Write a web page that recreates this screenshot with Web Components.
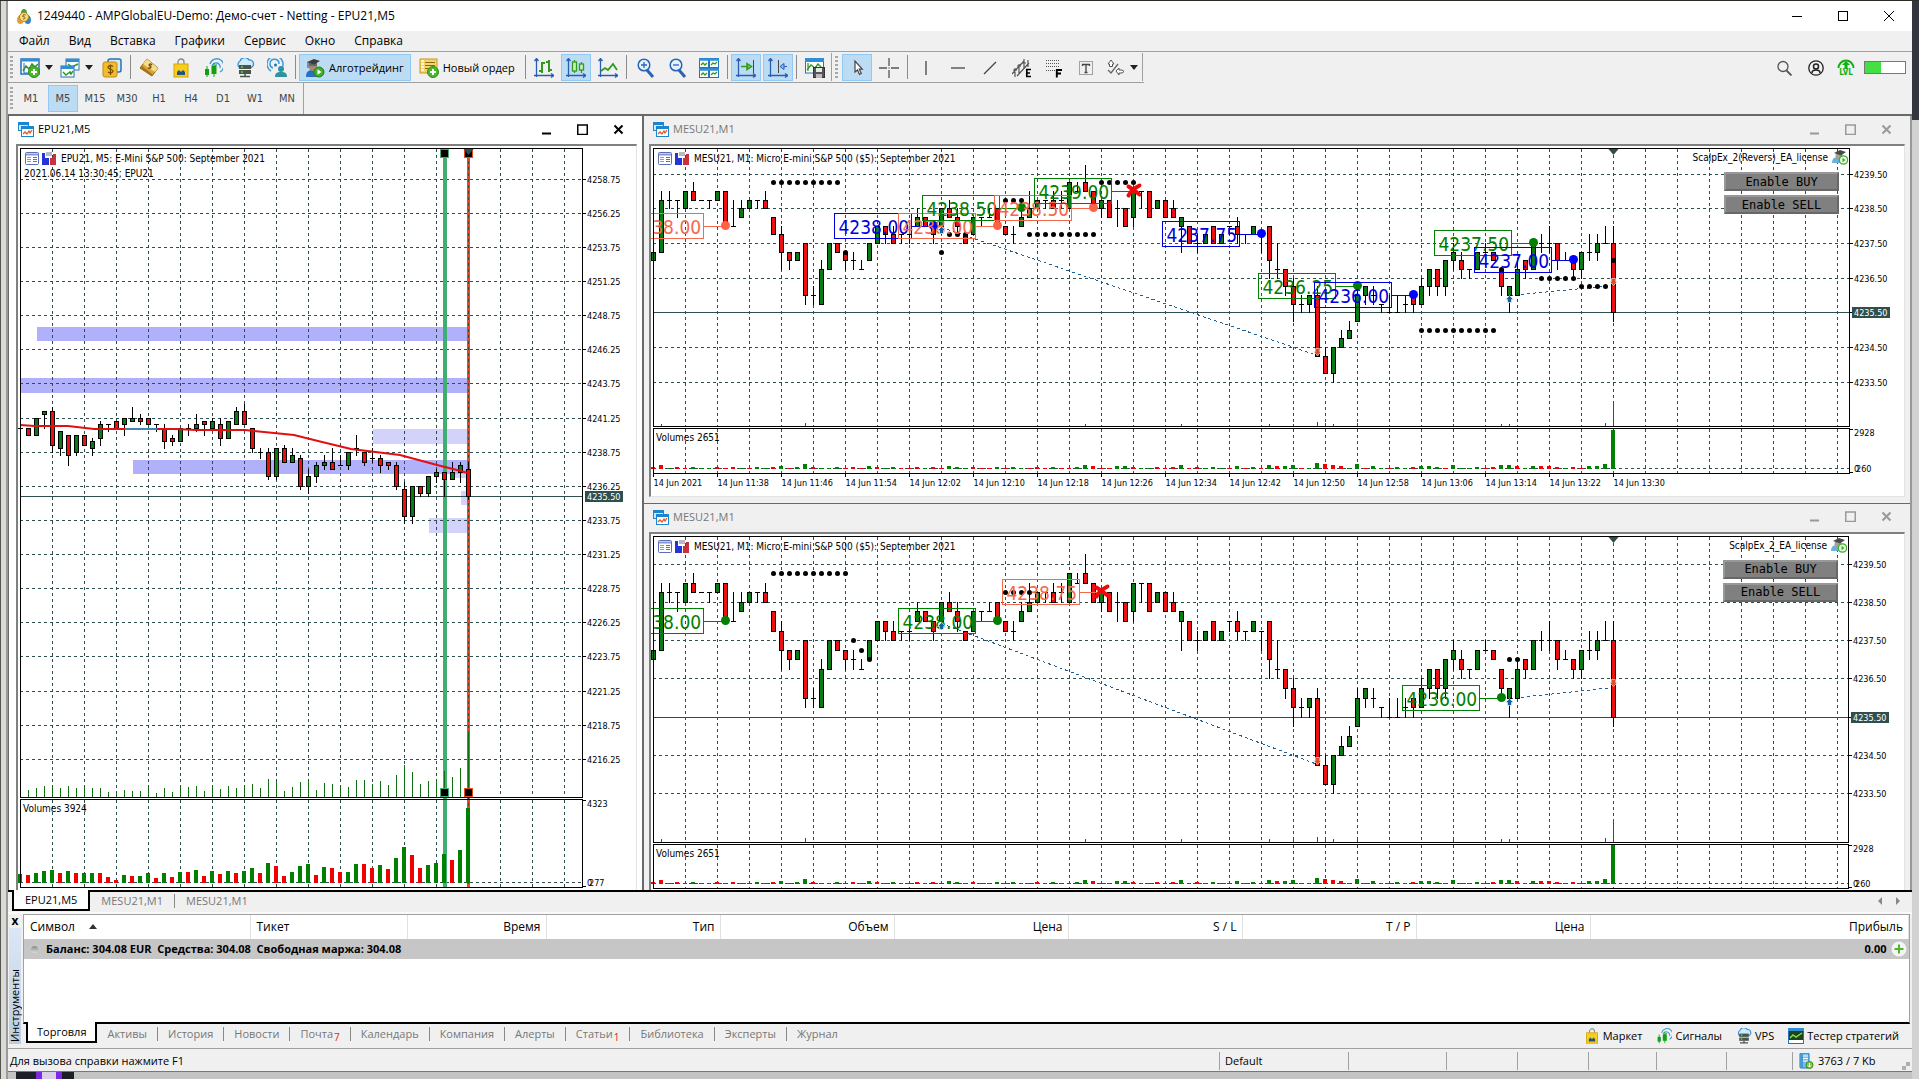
<!DOCTYPE html>
<html lang="ru">
<head>
<meta charset="utf-8">
<title>1249440 - AMPGlobalEU-Demo: Демо-счет - Netting - EPU21,M5</title>
<style>
html,body{margin:0;height:100%}
body{
  --ui:"Open Sans","Noto Sans",sans-serif;
  --tiny:"DejaVu Sans Condensed","DejaVu Sans",sans-serif;
  --face:#f0f0f0; --hot:#bcdcf4; --hotline:#90c8f6;
  font:12px/16px var(--ui);color:#000;overflow:hidden;box-sizing:border-box;
  padding:1px 7px 7px 8px;
  background:
    linear-gradient(#2b2b26,#2b2b26) 0 0/100% 1px no-repeat,
    linear-gradient(#33363f 0 120px,#d2d2d2 120px) right 0/7px 100% no-repeat,
    linear-gradient(90deg,#55554f 0 1px,#d9d9d6 1px 6px,#9a9a98 6px) 0 0/8px 100% no-repeat,
    linear-gradient(90deg,#1e2028 0 20px,#7a2be0 20px 26px,#d8d0e8 26px 40px,#7a2be0 40px 46px,#1e2028 46px) 16px 100%/58px 7px no-repeat,
    #c4c4c4;
}
mt-terminal{height:100%}
</style>
</head>
<body>
<mt-terminal></mt-terminal>
<script>
const ICONS={
app:`<path d="M8 1c2 0 3 2 3 4H5c0-2 1-4 3-4z" fill="#3aa53a"/><path d="M1 12c0-4 3-6 5-5l1 8c-3 2-6 1-6-3z" fill="#e0a030"/><path d="M15 12c0-4-3-6-5-5l-1 8c3 2 6 1 6-3z" fill="#2d86c8"/><circle cx="8" cy="9" r="4.500" fill="#f7e08a" stroke="#b98314"/><path d="M9.700 6.800H7.200l-.4 2c3-.6 3.300 2.600 0 2.300" fill="none" stroke="#8a5a08"/>`,
win:`<rect x=".5" y="1.500" width="10" height="8" fill="#cde9fb" stroke="#1a86d0"/><rect x="0" y="1" width="11" height="3" fill="#1a86d0"/><rect x="3.500" y="5.500" width="12" height="10" fill="#fff" stroke="#1a86d0"/><rect x="3" y="5" width="13" height="3" fill="#1a86d0"/><path d="M5 13l2-2 2 2 2-3 1 2 2-3" fill="none" stroke="#e5562b" stroke-width="1.300"/>`,
newchart:`<rect x="1" y="1" width="18" height="15" fill="#fff" stroke="#2472b8" stroke-width="1.500"/><rect x="1" y="1" width="18" height="2.500" fill="#2d8fd8"/><path d="M3 13l3-5 3 3 3-5 3 3 3-3" fill="none" stroke="#2e9a22" stroke-width="1.500"/><path d="M4 5v10h8" fill="none" stroke="#2472b8"/><circle cx="14" cy="14" r="5.500" fill="#49b82c" stroke="#2e8d18"/><path d="M14 11v6M11 14h6" stroke="#fff" stroke-width="2"/>`,
profiles:`<rect x="6" y="1" width="13" height="11" fill="#fff" stroke="#2472b8"/><rect x="6" y="1" width="13" height="3" fill="#2d8fd8"/><path d="M8 6l4 3 6-3" fill="none" stroke="#2e9a22" stroke-width="1.500"/><rect x="1" y="8" width="13" height="11" fill="#fff" stroke="#2472b8"/><rect x="1" y="8" width="13" height="3" fill="#2d8fd8"/><path d="M3 14l3 3 4-3 1 2 2-3" fill="none" stroke="#2e9a22" stroke-width="1.500"/>`,
dollar:`<rect x="6" y="1" width="13" height="13" rx="2" fill="#d6ecfb" stroke="#2472b8" stroke-width="1.500"/><rect x="1" y="4" width="14" height="15" rx="2" fill="#f2bd2c" stroke="#c58a10"/><path d="M11 8.500c-2-1.500-5-1-5 1s5 1.500 5 3.500-3 2.500-5 1M8.500 6.500v10.500" fill="none" stroke="#7a4d00" stroke-width="1.300"/>`,
gold:`<path d="M8 1l11 9-6 8L1 10z" fill="#d9a53a" stroke="#8f6614"/><path d="M8 1l11 9-3 4L4 6z" fill="#f6dc8c"/><path d="M1 10l12 8v-2L3 8z" fill="#a8741a"/><path d="M13 7c-2-2-4 0-2 1s0 3-2 2" fill="none" stroke="#7a5209" stroke-width="1.500"/>`,
bag:`<path d="M7 7V4a3 3 0 016 0v3" fill="none" stroke="#888" stroke-width="1.300"/><rect x="3" y="6" width="14" height="13" fill="#f6cf1d" stroke="#d1a40a"/><path d="M6 17v-3l2-2 2 2 2-2 2 2v3z" fill="#26517f"/>`,
signals:`<path d="M9 8a4 4 0 118 2M7 6a7 7 0 1110 8M11 11a3 3 0 013-4" fill="none" stroke="#3d9ad8" stroke-width="1.300"/><path d="M4 8v11M11 5v14" stroke="#12a012"/><rect x="2" y="11" width="4" height="6" fill="#12a012"/><rect x="8.500" y="8" width="5" height="8" fill="#12a012"/>`,
vps:`<path d="M5 10a4 4 0 010-7 5 5 0 019-1 4 4 0 011 8z" fill="#cfeafc" stroke="#3d8fd0" stroke-width="1.300"/><rect x="4" y="7" width="12" height="4" fill="#48564a"/><rect x="4" y="12" width="12" height="4" fill="#48564a"/><path d="M10 16v3M5 18.500h10" stroke="#48564a" stroke-width="1.500"/><path d="M6 9h2M6 14h2" stroke="#5bd64d" stroke-width="1.500"/>`,
cast:`<path d="M4 13a8 8 0 1111-3M6 10a4.500 4.500 0 116-4" fill="none" stroke="#3d9ad8" stroke-width="1.500"/><circle cx="8.500" cy="7" r="1.500" fill="#2472b8"/><circle cx="14" cy="11" r="3" fill="#2e93a0"/><path d="M8 19c0-4 2-5 6-5s6 1 6 5z" fill="#2e93a0"/>`,
algo:`<path d="M1 19c0-5 2-7 6-7s6 2 6 7z" fill="#2a6fc4"/><circle cx="8" cy="9" r="4" fill="#a08a70"/><path d="M4 5v3h8V5z" fill="#666"/><path d="M2 4l7-3 6 2-6 3.500z" fill="#3c3c3c"/><path d="M3 4v6" stroke="#3c3c3c"/><circle cx="14" cy="14" r="5" fill="#3fae2a" stroke="#278016"/><path d="M12.500 11.200l4 2.800-4 2.800z" fill="#fff"/>`,
order:`<rect x="1" y="1" width="17" height="14" fill="#f4d46a" stroke="#c69a1c"/><path d="M6 4.500h10M6 7.500h10M6 10.500h10" stroke="#8a6a10"/><path d="M2 3h3M2 6h3M2 9h3M2 12h3" stroke="#fff" stroke-width="1.500"/><circle cx="14" cy="14" r="5.500" fill="#49b82c" stroke="#2e8d18"/><path d="M14 11v6M11 14h6" stroke="#fff" stroke-width="2"/>`,
bars:`<path d="M2.500 1v18M0 17.500h20M17 15.500l3 2-3 2M.5 3l2-2.500 2 2.500" fill="none" stroke="#2a5cb4" stroke-width="1.300"/><path d="M8 4v11M5 13h3M8 5h3M15 2v12M12 4h3M15 12h3" stroke="#2e9a22" stroke-width="2"/>`,
candles:`<path d="M2.500 1v18M0 17.500h20M17 15.500l3 2-3 2M.5 3l2-2.500 2 2.500" fill="none" stroke="#2a5cb4" stroke-width="1.300"/><path d="M8.500 2v13M15.500 4v11" stroke="#2e9a22" stroke-width="1.300"/><rect x="6.500" y="4" width="4" height="9" fill="#cfeebb" stroke="#2e9a22" stroke-width="1.300"/><rect x="13.500" y="6" width="4" height="6" fill="#cfeebb" stroke="#2e9a22" stroke-width="1.300"/>`,
line:`<path d="M2.500 1v18M0 17.500h20M17 15.500l3 2-3 2M.5 3l2-2.500 2 2.500" fill="none" stroke="#2a5cb4" stroke-width="1.300"/><path d="M3 13l4-3 3 2 5-6 4 6" fill="none" stroke="#2e9a22" stroke-width="1.800"/>`,
zin:`<path d="M12 12l6 7" stroke="#2a62b8" stroke-width="3"/><circle cx="9" cy="7" r="5.800" fill="#e4f3fd" stroke="#2a62b8" stroke-width="1.500"/><path d="M9 4v6M6 7h6" stroke="#2a62b8" stroke-width="1.300"/>`,
zout:`<path d="M12 12l6 7" stroke="#2a62b8" stroke-width="3"/><circle cx="9" cy="7" r="5.800" fill="#e4f3fd" stroke="#2a62b8" stroke-width="1.500"/><path d="M6 7h6" stroke="#2a62b8" stroke-width="1.300"/>`,
tile:`<g fill="#fff" stroke="#2472b8"><rect x=".5" y=".5" width="9" height="9"/><rect x="10.500" y=".5" width="9" height="9"/><rect x=".5" y="10.500" width="9" height="9"/><rect x="10.500" y="10.500" width="9" height="9"/></g><path d="M0 1.500h20M0 11.500h20" stroke="#2d8fd8" stroke-width="2.500"/><path d="M2 7l2-2 2 2 2-2M12 7l2-2 2 1 2-2M2 17l2-2 2 2 2-2M12 17l2-2 2 1 2-2" fill="none" stroke="#2e9a22" stroke-width="1.300"/>`,
scroll:`<path d="M2.500 1v18M0 17.500h20M17 15.500l3 2-3 2M.5 3l2-2.500 2 2.500" fill="none" stroke="#2a5cb4" stroke-width="1.300"/><path d="M17.500 2v13" stroke="#444"/><path d="M5 8.500h7M11 5.500l4.500 3-4.500 3z" stroke="#2e9a22" stroke-width="1.500" fill="#6cc84a"/>`,
shift:`<path d="M2.500 1v18M0 17.500h20M17 15.500l3 2-3 2M.5 3l2-2.500 2 2.500" fill="none" stroke="#2a5cb4" stroke-width="1.300"/><path d="M10.500 2v13" stroke="#444"/><path d="M19 8.500h-3M16 5.500l-4 3 4 3z" stroke="#2a5cb4" fill="#8fbcec"/>`,
save:`<rect x=".5" y="1" width="18" height="14" fill="#fff" stroke="#2472b8"/><rect x="0" y="0" width="19" height="4" fill="#2d8fd8"/><path d="M3 5v8M2 12l4-5 4 3 3-4 4 4" fill="none" stroke="#2e9a22" stroke-width="1.300"/><rect x="8.500" y="9.500" width="11" height="10" fill="#555" stroke="#333"/><rect x="11" y="10" width="6" height="4" fill="#e8e8e8"/><rect x="11" y="16" width="6" height="4" fill="#bbb"/>`,
cursor:`<path d="M8 3v11l2.500-2 2 4.500 1.800-1-2-4.300h3z" fill="#fff" stroke="#444" stroke-width="1.200"/>`,
cross:`<path d="M10 0v8M10 12v8M0 10h8M12 10h8" stroke="#555" stroke-width="1.300"/><circle cx="10" cy="10" r=".7" fill="#555"/>`,
vline:`<path d="M10 3v14" stroke="#444" stroke-width="1.300"/>`,
hline:`<path d="M3 10h14" stroke="#444" stroke-width="1.300"/>`,
trend:`<path d="M4 16L16 4" stroke="#444" stroke-width="1.300"/>`,
chan:`<path d="M0 16L12 3M5 18L17 5M3 10v9M7 6v9M12 1v9M16 2v7M1 12h4M5 8h4M10 5h4" stroke="#555" stroke-width="1.200" fill="none"/><path d="M14 11.500h5M14 15h4M14 18.500h5M14.800 11v8" stroke="#000" stroke-width="1.700"/>`,
fib:`<path d="M2 2.500h14M2 5.500h14M2 8.500h14M2 12.500h9" stroke="#555" stroke-dasharray="1 1"/><path d="M12 12h6M12 15.500h5M12.800 11.500v8" stroke="#000" stroke-width="1.900"/>`,
text:`<rect x="3.500" y="3.500" width="13" height="13" fill="none" stroke="#555" stroke-dasharray="1 1"/><path d="M6 6.500h8M10 6.500v8M8.500 14.500h3M6.500 6v2M13.500 6v2" stroke="#444" stroke-width="1.300"/>`,
shapes:`<path d="M3 6l3-4 3 4H7.500v2.500h-3V6zM11 13l3-3 0 2 3 0 2 1.500-2 1.500-3 0 0 2z" fill="#fff" stroke="#555"/><path d="M3 12l3 3 7-9" fill="none" stroke="#666" stroke-width="1.300"/>`,
search:`<circle cx="7" cy="6.500" r="5" fill="none" stroke="#555" stroke-width="1.300"/><path d="M10.500 10.500l5 5" stroke="#555" stroke-width="1.800"/>`,
user:`<circle cx="8" cy="8" r="7.200" fill="none" stroke="#222" stroke-width="1.300"/><circle cx="8" cy="6.500" r="2.500" fill="none" stroke="#222" stroke-width="1.500"/><path d="M4 13c0-4 8-4 8 0" fill="none" stroke="#222" stroke-width="1.500"/>`,
list:`<rect x=".5" y=".5" width="13" height="12" rx="1" fill="#fff" stroke="#5b6fb8"/><path d="M1 2.500h12" stroke="#8796d8" stroke-width="2"/><path d="M2 5.500h4M2 7.500h4M2 9.500h4" stroke="#e77"/><path d="M8 5.500h4M8 7.500h4M8 9.500h4" stroke="#66c"/>`,
dom:`<path d="M0 1h3v5h4v7H0z" fill="#2534d8"/><path d="M14 2h-3v4H8v7h6z" fill="#c8323c"/><rect x="4" y="0" width="6" height="4" fill="#b8b8c8"/>`,
hat:`<path d="M0 13c0-4 2-6 6-6s5 2 5 6z" fill="#6ab0e4"/><circle cx="7" cy="6" r="3.500" fill="#a8a296"/><path d="M2 3l6-3 6 2-5 3.500z" fill="#4a4a4a"/><circle cx="11.500" cy="10" r="4.200" fill="#eaf8e0" stroke="#3fae2a" stroke-width="1.300"/><path d="M10.500 7.800l3 2.200-3 2.200z" fill="#3fae2a"/>`,
tester:`<rect x=".5" y=".5" width="15" height="15" fill="#fff" stroke="#2472b8"/><rect x="0" y="0" width="16" height="3" fill="#2d8fd8"/><rect x="1" y="3" width="14" height="9" fill="#204020"/><path d="M2 10l3-3 3 2 6-4" stroke="#7de04a" fill="none" stroke-width="1.500"/>`,
net:`<rect x="2" y="0" width="9" height="15" rx="1" fill="#6ec0f0" stroke="#2472b8"/><path d="M5 3h5M5 5.500h5M5 8h5" stroke="#fff"/><path d="M4 1v13" stroke="#2472b8"/><circle cx="11.500" cy="12" r="3.500" fill="#7cc84a" stroke="#3d8a18"/><path d="M11.500 10v4M10 12.500l1.500 1.500 1.500-1.500" stroke="#fff" fill="none"/>`,
plus:`<circle cx="8" cy="8" r="7.500" fill="#f4f4f4"/><path d="M8 3.500v9M3.500 8h9" stroke="#4cb82a" stroke-width="2"/>`,
min:`<path d="M1 9.500h9" stroke="currentColor" stroke-width="2"/>`,
max:`<rect x=".75" y="1" width="9.500" height="9.500" fill="none" stroke="currentColor" stroke-width="1.500"/>`,
close:`<path d="M1.500 1.500l8 8M9.500 1.500l-8 8" stroke="currentColor" stroke-width="2"/>`,
min1:`<path d="M1 6.500h10" stroke="currentColor"/>`,
max1:`<rect x="1.500" y="1.500" width="9" height="9" fill="none" stroke="currentColor"/>`,
close1:`<path d="M1 1l10 10M11 1L1 11" stroke="currentColor"/>`,
};
class MtIcon extends HTMLElement{
  connectedCallback(){
    if(this.shadowRoot)return;
    const box=+(this.getAttribute('box')||20), s=+(this.getAttribute('size')||box);
    this.attachShadow({mode:'open'}).innerHTML=`<style>:host{display:inline-flex;flex:none;width:${s}px;height:${s}px}svg{display:block;width:100%;height:100%}</style><svg viewBox="0 0 ${box} ${box}" aria-hidden="true">${ICONS[this.getAttribute('name')]}</svg>`;
  }
}
customElements.define('mt-icon',MtIcon);

class MtTitlebar extends HTMLElement{
  constructor(){super();this.attachShadow({mode:'open'}).innerHTML=`<style>
  :host{display:flex;height:30px;background:#fff;align-items:center;padding:0 3px 0 8px;gap:5px}
  span{flex:1}button{border:0;background:none;width:40px;height:28px;padding:0;color:#000;display:flex;align-items:center;justify-content:center}
  .c{display:flex;gap:6px}
  </style><mt-icon name="app" box="16"></mt-icon><span><slot></slot></span><div class="c">
  <button aria-label="Свернуть"><mt-icon name="min1" box="12"></mt-icon></button><button aria-label="Развернуть"><mt-icon name="max1" box="12"></mt-icon></button><button aria-label="Закрыть"><mt-icon name="close1" box="12"></mt-icon></button></div>`}
}
customElements.define('mt-titlebar',MtTitlebar);

class MtMenu extends HTMLElement{
  constructor(){super();this.attachShadow({mode:'open'}).innerHTML=`<style>
  :host{display:block;background:var(--face);border-bottom:1px solid #a0a0a0}
  nav{display:flex;height:20px;align-items:center;gap:19px;padding:0 11px}
  button{font:inherit;border:0;background:none;padding:0;color:#000}
  </style><nav>${['Файл','Вид','Вставка','Графики','Сервис','Окно','Справка'].map(t=>`<button>${t}</button>`).join('')}</nav>`}
}
customElements.define('mt-menu',MtMenu);

class MtToolbar extends HTMLElement{
  constructor(){super();
  const b=(n,l,on)=>`<button aria-label="${l}"${on?' aria-pressed="true"':''}><mt-icon name="${n}"></mt-icon></button>`;
  const d=(n,l)=>`<button class="dd" aria-label="${l}"><mt-icon name="${n}"></mt-icon><i></i></button>`;
  const s='<hr>';
  this.attachShadow({mode:'open'}).innerHTML=`<style>
  :host{display:flex;height:31px;background:var(--face);align-items:stretch;justify-content:space-between}
  .g{display:flex;align-items:stretch;border-bottom:1px solid #a0a0a0}
  .grip{width:3px;margin:4px 3px 4px 2px;background:repeating-linear-gradient(#a8a8a8 0 2px,transparent 2px 4px)}
  button{width:30px;margin:2px 1px 1px;border:1px solid transparent;background:none;padding:0;display:flex;align-items:center;justify-content:center;font:11px/16px var(--ui);color:#000;box-sizing:border-box}
  .dd{width:38px;gap:5px}
  .dd i{border:4px solid transparent;border-top:5px solid #222;border-bottom:0}
  button[aria-pressed]{background:var(--hot);border-color:var(--hotline)}
  .w{width:auto;padding:0 6px 0 5px;gap:4px}
  hr{width:1px;border:0;background:#8c8c8c;margin:3px 2px}
  .e{width:1px;background:#a0a0a0;margin:1px 1px 1px 0}
  .r{display:flex;align-items:center;padding-right:6px}
  .r button{width:auto;margin:0 0 0 16px;border:0}
  .r .lvl{display:flex;flex-direction:column;align-items:center;font:bold 8px/8px var(--tiny);color:#12b012;margin-left:13px}
  .lvl svg{display:block}
  .bat{width:42px;height:13px;border:1px solid #777;box-sizing:border-box;background:linear-gradient(90deg,#43e043 40%,#fff 40%);margin-left:9px}
  </style><div class="g"><div class="grip"></div>
  ${d('newchart','Новый график')}${d('profiles','Профили')}${b('dollar','Обзор рынка')}${s}${b('gold','Счет')}${b('bag','Маркет')}${b('signals','Сигналы')}${b('vps','VPS')}${b('cast','Сообщество')}${s}
  <button class="w" aria-pressed="true"><mt-icon name="algo"></mt-icon>Алготрейдинг</button><button class="w"><mt-icon name="order"></mt-icon>Новый ордер</button>${s}
  ${b('bars','Бары')}${b('candles','Свечи',1)}${b('line','Линия')}${s}${b('zin','Увеличить')}${b('zout','Уменьшить')}${b('tile','Плитка')}${s}${b('scroll','Автопрокрутка',1)}${b('shift','Сдвиг',1)}${s}${b('save','Шаблоны')}<div class="e"></div>
  <div class="grip"></div>${b('cursor','Курсор',1)}${b('cross','Перекрестие')}${s}${b('vline','Вертикальная линия')}${b('hline','Горизонтальная линия')}${b('trend','Трендовая линия')}${b('chan','Канал')}${b('fib','Фибоначчи')}${b('text','Текст')}${d('shapes','Объекты')}<div class="e"></div></div>
  <div class="r"><button aria-label="Поиск"><mt-icon name="search" box="16"></mt-icon></button><button aria-label="Профиль"><mt-icon name="user" box="16"></mt-icon></button>
  <button class="lvl"><svg width="18" height="11" viewBox="0 0 18 11"><path d="M1.500 10a7.500 7.500 0 0115 0" fill="none" stroke="#12b012" stroke-width="2"/><path d="M9 3l4 4h-2.500v4h-3V7H5z" fill="#12b012"/></svg><span>LVL</span></button><div class="bat"></div></div>`}
}
customElements.define('mt-toolbar',MtToolbar);

class MtFrames extends HTMLElement{
  constructor(){super();this.attachShadow({mode:'open'}).innerHTML=`<style>
  :host{display:flex;height:31px;background:var(--face);border-bottom:2px solid #696969;align-items:stretch}
  .grip{width:3px;margin:4px 2px 4px 2px;background:repeating-linear-gradient(#a8a8a8 0 2px,transparent 2px 4px)}
  button{width:30px;margin:2px 1px;border:1px solid transparent;box-sizing:border-box;background:none;padding:0;font:11px/16px var(--tiny);color:#444}
  button[aria-pressed]{background:var(--hot);border-color:var(--hotline)}
  .e{width:1px;background:#a0a0a0}
  </style><div class="grip"></div>${['M1','M5','M15','M30','H1','H4','D1','W1','MN'].map(t=>`<button${t=='M5'?' aria-pressed="true"':''}>${t}</button>`).join('')}<div class="e"></div>`}
}
customElements.define('mt-frames',MtFrames);

class MtWindow extends HTMLElement{
  constructor(){super();this.attachShadow({mode:'open'}).innerHTML=`<style>
  :host{display:flex;flex-direction:column;flex:1;min-height:0;min-width:0;background:var(--face);color:#777;border-bottom:1px solid #696969}
  header{display:flex;height:28px;align-items:center;padding:0 8px 2px 9px;gap:4px;box-sizing:border-box;font-size:11px}
  :host([active]) header{background:#fff}
  :host([active]){color:#000;background:#fff}
  header span{flex:1}
  button{border:0;background:none;color:#999;width:32px;height:22px;padding:0;display:flex;align-items:center;justify-content:center}
  :host([active]) button{color:#000}
  .body{flex:1;min-height:0;display:flex;background:#fff;margin:0 5px 6px;border:solid #a0a0a0;border-width:2px 1px 1px 2px;border-color:#808080 #e3e3e3 #e3e3e3 #808080}
  :host([active]) .body{margin-left:7px}
  :host([cut]) .body{margin-bottom:0;border-bottom:0}
  :host([cut]){border-bottom:0}
  </style><header><mt-icon name="win" box="16"></mt-icon><span><slot name="title"></slot></span>
  <button aria-label="Свернуть"><mt-icon name="min" box="11"></mt-icon></button><button aria-label="Развернуть"><mt-icon name="max" box="11"></mt-icon></button><button aria-label="Закрыть"><mt-icon name="close" box="11"></mt-icon></button></header><div class="body"><slot></slot></div>`}
}
customElements.define('mt-window',MtWindow);

/* Candles: high top bottom low colour, in quarter-point ticks below the base price */
const M5=`3 3 3 3 d|3 3 5 5 r|0 0 5 5 g|-2 -2 -1 3 g|-3 -2 8 10 r|4 4 9 11 g|5 5 11 14 r|5 5 10 11 g|5 5 8 8 r|6 7 9 11 g|1 2 6 8 g|2 2 2 4 d|1 1 3 3 r|0 0 2 5 g|-3 0 1 1 g|-1 0 1 2 r|0 0 2 2 r|2 2 2 4 d|2 3 7 9 r|5 6 7 8 r|3 3 7 7 g|2 3 3 5 d|-1 2 3 4 g|1 1 2 5 r|0 1 3 3 g|0 2 6 8 r|1 1 6 6 g|-3 -2 2 2 g|-4 -2 2 2 r|3 3 9 10 r|9 10 10 12 d|9 10 17 18 r|9 9 17 18 g|8 9 13 13 r|9 11 13 13 g|11 12 20 21 r|15 17 20 22 g|13 14 17 19 g|11 13 14 15 g|9 13 15 15 r|11 14 14 14 d|10 10 14 15 g|5 9 9 11 d|10 10 13 14 r|9 12 12 13 d|11 12 14 16 r|13 13 14 15 r|13 14 20 21 r|19 21 29 31 r|20 20 29 31 g|20 20 22 23 r|17 17 22 23 g|15 16 17 19 g|16 16 18 23 r|13 16 18 18 g|13 14 16 19 g|13 15 23 24 r`;
const M1=`9 9 10 10 g|2 3 9 9 g|2 3 3 4 d|3 3 3 5 d|2 2 4 4 g|1 2 3 3 r|3 3 3 3 d|3 3 3 4 d|2 2 3 3 g|2 2 6 6 r|3 6 6 6 d|3 4 5 5 g|3 3 4 4 g|3 3 3 4 d|2 3 4 4 r|5 5 7 7 r|6 7 9 11 r|9 9 10 11 r|9 9 10 10 g|8 8 14 15 r|13 14 14 15 d|10 11 15 15 g|8 8 11 11 g|8 8 9 9 r|9 9 10 11 r|9 10 10 11 d|10 11 11 11 d|8 8 10 10 g|6 6 8 8 g|6 6 7 8 r|6 7 8 8 r|7 7 7 8 d|6 7 7 8 d|4 5 6 6 g|5 5 6 6 r|6 6 7 8 r|4 4 6 6 g|3 4 5 5 r|4 5 6 7 r|7 7 8 8 r|5 5 7 7 g|5 5 5 6 d|4 5 5 5 d|4 4 6 6 r|6 6 7 7 r|6 7 7 8 d|4 5 6 6 g|2 4 5 5 g|3 3 4 4 g|3 3 3 4 d|2 3 4 4 r|2 3 3 4 d|1 1 4 4 g|1 2 2 2 d|-1 1 2 2 r|2 2 4 4 r|3 3 4 5 g|3 3 5 5 r|3 4 4 6 d|4 4 6 6 r|2 2 5 6 g|2 2 2 4 d|2 2 5 5 r|3 3 4 4 g|3 3 5 5 r|3 4 5 5 r|5 5 6 9 g|6 6 8 8 r|7 8 8 9 d|7 7 8 8 g|6 6 8 8 r|7 7 8 8 g|6 6 6 7 d|5 6 7 8 r|7 7 7 8 d|6 6 7 7 g|7 7 7 9 d|6 6 10 12 r|8 11 11 12 d|11 11 13 14 r|12 13 15 17 r|14 15 15 16 d|14 14 15 16 g|13 14 21 21 r|20 21 23 23 r|20 20 23 24 g|18 19 20 20 g|17 18 19 19 g|13 14 17 17 g|13 13 14 15 g|13 14 14 15 d|15 15 15 16 d|14 16 16 16 d|14 16 16 16 d|14 15 15 16 d|14 14 15 16 r|12 13 15 15 g|11 11 13 14 g|11 11 13 14 r|10 10 13 14 g|8 9 10 11 g|9 10 11 12 r|11 11 11 12 d|9 9 11 11 g|8 9 9 9 d|9 9 10 10 r|11 11 13 14 r|13 13 14 16 g|10 11 14 14 g|10 10 11 12 r|8 8 11 11 g|7 8 8 9 d|6 8 8 9 d|8 8 10 11 r|9 10 10 10 d|10 10 11 12 r|9 9 11 12 g|7 9 9 10 d|7 8 9 10 g|6 8 8 8 d|6 8 16 17 r`;
const V5='9g 8r 10g 12g 13g 10r 12g 10r 10g 10g 10r 6r 3r 8g 7r 7g 10g 5r 10g 6r 11g 11r 13g 7r 12g 9r 12g 10r 12g 15g 10r 20g 17r 7r 11g 17g 19g 8r 16g 15r 11r 11g 19g 19r 15r 18g 14r 25g 36g 28r 15r 18g 20g 29g 23r 33g 75g';
const big1={1:'4r',16:'3g',19:'5g',27:'3g',37:'3g',54:'4g',55:'3r',58:'3g',59:'3g',66:'4g',73:'3g',77:'4g',78:'3r',79:'3g',80:'4g',83:'6g',84:'5r',85:'4r',86:'3r',88:'5g',90:'3g',96:'3g',97:'3g',100:'4g',106:'4g',107:'4g',108:'3r',110:'3g',111:'3r',112:'3r',117:'3g',118:'3g',119:'5g',120:'39g'};
const V1=[...Array(121)].map((_,i)=>big1[i]||((i*7%5<2)?2:1)+('rrgrrgggrrrgrggr'[i%16])).join(' ');
const G='#008000',B='#0000dd',C='#f4694b';
const row=(a,b,t)=>{const o=[];for(let i=a;i<=b;i++)o.push([i,t]);return o};
const CFG={
 m5:{candles:M5,vol:V5,y0:272,tick:3.413,axis:54,last:23,prices:[4258.75,2.5,18],base:4241.25,sub:93,bot:3,max:'4323',zero:['0','277'],volName:'Volumes 3924',title:'EPU21, M5:  E-Mini S&amp;P 500: September 2021',title2:'2021.06.14 13:30:45; EPU21',volScale:.88,tx:43},
 m1a:{candles:M1,vol:V1,y0:28,tick:8.667,axis:55,last:16,prices:[4239.5,1,7],base:4239.5,sub:70,bot:23,max:'2928',zero:['0','260'],volName:'Volumes 2651',title:'MESU21, M1:  Micro E-mini S&amp;P 500 ($5): September 2021',time:1,ea:'ScalpEx_2(Revers)_EA_license',tx:43,volScale:.6,
  labels:[[9,6,C,'4238.00'],[35,6,B,'4238.00'],[43,6,C,'4238.00'],[46,4,G,'4238.50'],[55,4,C,'4238.50'],[60,2,G,'4239.00',1],[76,7,B,'4237.75'],[88,13,G,'4236.25'],[95,14,B,'4236.00'],[110,8,G,'4237.50'],[115,10,B,'4237.00']],
  dots:[...row(15,23,1),...row(44,46,3),[24,9],...row(37,39,7),[36,9],...row(47,55,7),...row(56,60,1),...row(96,105,18),...row(111,115,12),...row(116,119,13),[120,10],[106,11]]},
 m1b:{candles:M1,vol:V1,y0:30,tick:9.583,axis:56,last:16,prices:[4239.5,1,7],base:4239.5,sub:49,bot:3,max:'2928',zero:['0','260'],volName:'Volumes 2651',title:'MESU21, M1:  Micro E-mini S&amp;P 500 ($5): September 2021',ea:'ScalpEx_2_EA_license',tx:43,volScale:.8,
  labels:[[9,6,G,'4238.00'],[43,6,G,'4238.00'],[56,3,C,'4238.75',1],[106,14,G,'4236.00']],
  dots:[...row(15,24,1),[25,8],[26,9],[27,10],...row(44,47,3),[107,10],[108,10]]}
};
class MtChart extends HTMLElement{
  constructor(){super();this.attachShadow({mode:'open'}).innerHTML=`<style>
  :host{display:block;flex:1;min-width:0;min-height:0;position:relative;overflow:hidden;color:#000}
  svg{display:block;position:absolute;inset:0;width:100%;height:100%;font:9px var(--tiny)}
  .head{position:absolute;left:7px;top:6px;display:flex;gap:3px}
  .ea{position:absolute;top:4px;display:flex;flex-direction:column;align-items:flex-end}
  .ea div{display:flex;gap:4px;align-items:center;font:10px/16px var(--tiny)}
  .ea button{width:115px;height:19px;margin:4px 9px 0 0;padding:0;background:#808080;border:solid;border-width:2px;border-color:#989898 #686868 #686868 #989898;font:12px/14px "DejaVu Sans Mono",monospace;color:#000}
  .ea button:first-of-type{margin-top:6px}
  </style><svg></svg><div class="head"><mt-icon name="list" box="14"></mt-icon><mt-icon name="dom" box="14"></mt-icon></div>`}
  connectedCallback(){
    this.c=CFG[this.getAttribute('kind')];
    if(this.c.ea){const d=document.createElement('div');d.className='ea';d.style.right=(this.c.axis+1)+'px';
      d.innerHTML=`<div>${this.c.ea}<mt-icon name="hat" box="16"></mt-icon></div><button>Enable BUY</button><button>Enable SELL</button>`;this.shadowRoot.append(d)}
    this.ro=new ResizeObserver(()=>this.draw());this.ro.observe(this);
  }
  draw(){
    const c=this.c,W=this.clientWidth,H=this.clientHeight;if(!W)return;
    const L=2,R=W-c.axis,mb=H-c.sub,vt=mb+2,vb=H-c.bot;
    const X=i=>2.5+8*i,Y=t=>Math.floor(c.y0+t*c.tick)+.5;
    let g='',o='',ax='';
    const m5=c.candles===M5;
    for(let x=34.5;x<R;x+=32){g+=`M${x} 3V${mb}M${x} ${vt+1}V${vb}`}
    for(let k=0;k<c.prices[2];k++){const p=c.prices[0]-k*c.prices[1],y=Y((c.base-p)*4);
      g+=`M${L} ${y}H${R}`;ax+=`<path d="M${R} ${y}h4" stroke="#000"/>`;
      if(p!==4235.5)ax+=`<text x="${R+5}" y="${y+3.500}">${p.toFixed(2)}</text>`}
    g+=`M${L} ${vb-4.500}H${R}`;
    if(m5){const r=(x,y,w,h,f)=>`<rect x="${x}" y="${y}" width="${w}" height="${h}" fill="${f}"/>`,D='#b0b0fb',Q='#d2d2fb';
      o+=r(19,181,430,14,D)+r(2,232,447,15,D)+r(115,314,334,14,D)+r(355,283,94,15,Q)+r(435,328,14,4,Q)+r(443,345,6,14,Q)+r(411,372,38,15,Q)}
    o+=`<path d="${g}" stroke="#2f4f4f" stroke-dasharray="3 3" fill="none"/>`;
    const ly=Y(c.last);
    if(m5)o+=`<path d="M426.500 3V${vb}" stroke="#3fae70" stroke-width="4"/><path d="M450.500 3V${vb}" stroke="#e8491d" stroke-width="3"/><path d="M450.500 3V${vb}" stroke="#2f4f4f" stroke-dasharray="3 3"/>`;
    o+=`<path d="M${L} ${ly}H${R}" stroke="#2f4f4f"/>`;
    const vs=c.vol.split(' ');
    vs.forEach((v,i)=>{const h=parseInt(v),f=v.endsWith('g')?'#008000':'#f00000',s=i==120?23:Math.round(h*c.volScale);
      if(m5||h>3)o+=`<path d="M${X(i)} ${mb}v${-s}" stroke="#107010"/>`;
      o+=`<rect x="${X(i)-2.500}" y="${vb-4-h}" width="4" height="${h}" fill="${f}"/>`});
    if(!m5){o+=`<g stroke="#1d5f96" stroke-dasharray="3 3"><path d="M${X(36)} ${Y(6.200)}L${X(83)} ${Y(20.900)}M${X(107)} ${Y(14)}L${X(120)} ${Y(12.900)}"/></g>`}
    c.candles.split('|').forEach((s,i)=>{const a=s.split(' '),x=X(i),[h,t,b,l]=a.slice(0,4).map(n=>Y(+n));
      if(h!==l)o+=`<path d="M${x} ${h-.5}V${l+.5}" stroke="#000"/>`;
      if(a[4]==='d')o+=`<path d="M${x-2.500} ${t}h5" stroke="#000"/>`;
      else o+=`<rect x="${x-2}" y="${t}" width="4" height="${b-t}" fill="${a[4]==='g'?'#0a7a14':'#ee1010'}" stroke="#000"/>`});
    if(m5){o+=`<g fill="none" shape-rendering="auto"><polyline points="2,279 17,280 50,280 76,283 158,283 178,284 227,284 276,289 300,295 333,303 382,309 419,319 439,324 450,327" stroke="#e01010" stroke-width="2"/><path d="M107 283h32" stroke="#4682b4" stroke-width="2"/></g>`;
      [[426.5,3,'#3fae70'],[450.5,3,'#e8491d'],[426.5,mb-9,'#3fae70'],[450.5,mb-9,'#e8491d']].forEach(p=>o+=`<rect x="${p[0]-4}" y="${p[1]+.5}" width="8" height="8" stroke="${p[2]}"/>`)}
    const lx=m5?450.5:X(120);
    o+=`<path d="M${lx-5} 3h10l-5 6z" fill="#2f4f4f" shape-rendering="auto"/>`;
    o+='<g shape-rendering="auto">';
    (c.dots||[]).forEach(d=>o+=`<circle cx="${X(d[0])}" cy="${Y(d[1])}" r="2.500"/>`);
    (c.labels||[]).forEach(([i,t,col,s,cr])=>{const x=X(i),y=Y(t);
      o+=`<rect x="${x-99}" y="${y-13}" width="77" height="25" fill="none" stroke="${col}" shape-rendering="crispEdges"/><path d="M${x-22} ${y}h20" stroke="${col}"/><text x="${x-95}" y="${y+7}" font-size="19" fill="${col}">${s}</text>`;
      o+=cr?`<path d="M${x-5} ${y-5}q5 3 11 8M${x+6} ${y-6}q-8 4-11 10" stroke="#f00808" stroke-width="4" fill="none" stroke-linecap="round"/>`:`<circle cx="${x}" cy="${y-1}" r="4.500" fill="${col===B?'#0000ff':col===C?'#ff6347':col}"/>`});
    if(!m5){[[36,6.5,'#1660a0',1],[107,14.5,'#1660a0',1],[83,20.5,'#d8502c',-1],[120,12.4,'#d8502c',-1]].forEach(([i,t,f,s])=>{const x=X(i),y=Y(t);o+=`<path d="M${x} ${y-4*s}l4 ${4*s}h-2v${3*s}h-4v${-3*s}h-2z" fill="${f}" stroke="#fff" stroke-width=".6"/>`})}
    o+='</g>';
    o+=`<g stroke="#000" fill="none"><path d="M${L+.5} ${mb+.5}V2.500H${R+.5}V${mb+.5}z"/><path d="M${L+.5} ${vb+.5}V${vt+.5}H${R+.5}V${vb+.5}z"/><path d="M${R} ${vt+1.500}h4M${R} ${vb-.5}h4"/></g>`;
    ax+=`<rect x="${R+3}" y="${ly-5.500}" width="38" height="11" fill="#2f4f4f"/><text x="${R+5}" y="${ly+3.500}" fill="#fff">4235.50</text>`;
    ax+=`<text x="${R+5}" y="${vt+8}">${c.max}</text><text x="${R+5}" y="${vb-1}">${c.zero[0]}</text><text x="${R+7}" y="${vb-1}">${c.zero[1]}</text>`;
    ax+=`<g font-size="10"><text x="${c.tx}" y="16">${c.title}</text>${c.title2?`<text x="6" y="31">${c.title2}</text>`:''}<text x="5" y="${vt+13}">${c.volName}</text></g>`;
    if(c.time){['14 Jun 2021','14 Jun 11:38','14 Jun 11:46','14 Jun 11:54','14 Jun 12:02','14 Jun 12:10','14 Jun 12:18','14 Jun 12:26','14 Jun 12:34','14 Jun 12:42','14 Jun 12:50','14 Jun 12:58','14 Jun 13:06','14 Jun 13:14','14 Jun 13:22','14 Jun 13:30'].forEach((s,k)=>ax+=`<path d="M${X(k*8)} ${vb}v4" stroke="#000"/><text x="${X(k*8)}" y="${vb+13}">${s}</text>`)}
    this.shadowRoot.querySelector('svg').innerHTML=`<g shape-rendering="crispEdges">${o}</g><g shape-rendering="crispEdges">${ax}</g>`;
  }
}
customElements.define('mt-chart',MtChart);

class MtTabs extends HTMLElement{
  constructor(){super();this.attachShadow({mode:'open'}).innerHTML=`<style>
  :host{display:flex;justify-content:space-between;align-items:flex-start;background:var(--face);border-top:2px solid #000;height:20px}
  div{display:flex;padding-left:4px}
  button{font:11px/16px var(--ui);color:#777;border:0;background:none;padding:0 11px;height:18px;position:relative}
  button+button+button{border-left:1px solid #888;margin:2px 0 0;height:14px;line-height:12px}
  .on{background:#fff;color:#000;border:solid #000;border-width:0 2px 2px;margin-top:-2px;height:21px}
  .ar{gap:14px;padding:5px 12px 0 0}
  .ar i{border:4px solid transparent;border-right-color:#888}.ar i+i{border:4px solid transparent;border-left-color:#888;border-right:0}
  </style><div role="tablist"><button class="on" role="tab">EPU21,M5</button><button role="tab">MESU21,M1</button><button role="tab">MESU21,M1</button></div><div class="ar"><i></i><i></i></div>`}
}
customElements.define('mt-tabs',MtTabs);

class MtToolbox extends HTMLElement{
  constructor(){super();
  const tabs=['Торговля','Активы','История','Новости','Почта<sub>7</sub>','Календарь','Компания','Алерты','Статьи<sub>1</sub>','Библиотека','Эксперты','Журнал'];
  const cols=[[226,'Символ<i></i>'],[157,'Тикет'],[139,'Время'],[174,'Тип'],[174,'Объем'],[174,'Цена'],[174,'S / L'],[174,'T / P'],[174,'Цена'],[0,'Прибыль']];
  this.attachShadow({mode:'open'}).innerHTML=`<style>
  :host{display:flex;background:var(--face);border-top:2px solid #fafafa;height:137px;border-bottom:1px solid #a0a0a0;box-sizing:border-box}
  aside{width:14px;display:flex;flex-direction:column;align-items:center}
  aside button{border:0;background:none;padding:0;height:14px;font:bold 12px/10px var(--ui)}
  aside p{margin:0 0 4px;flex:1;width:12px;background:linear-gradient(#bccde0,#dbe7f5);writing-mode:vertical-rl;transform:rotate(180deg);font:11px/12px var(--ui);box-sizing:border-box;padding-top:2px;white-space:nowrap}
  section{flex:1;min-width:0;display:flex;flex-direction:column;margin:0 2px 0 1px}
  .v{flex:1;background:#fff;border:solid #a0a0a0;border-width:1px 1px 0 1px;border-bottom:2px solid #000}
  table{width:100%;border-collapse:collapse;table-layout:fixed}
  th{font-weight:normal;height:24px;padding:0 5px;text-align:right;border-right:1px solid #e2e2e2;box-sizing:border-box}
  th:nth-child(-n+2){text-align:left;padding-left:6px}
  th i{display:inline-block;border:4px solid transparent;border-bottom:5px solid #333;border-top:0;margin:0 0 2px 14px}
  td{background:#c6c6c6;height:20px;padding:0;font-weight:bold;font-size:11px}
  td span{display:flex;align-items:center}
  td:last-child span{justify-content:flex-end;gap:4px;padding-right:2px}
  td b{width:7px;height:7px;border-radius:4px;background:linear-gradient(#888,#ddd);margin:0 8px 0 7px}
  footer{display:flex;justify-content:space-between;height:24px;align-items:flex-start;font-size:11px}
  .t{display:flex;padding-left:3px;color:#777}
  .t button{font:inherit;color:inherit;border:0;background:none;padding:0 10px;height:14px;line-height:12px;margin-top:3px;white-space:nowrap}
  .t button+button+button{border-left:1px solid #888}
  .t .on{background:#fff;color:#000;border:solid #000;border-width:0 2px 2px;height:21px;line-height:16px;margin-top:-2px;padding:0 9px}
  sub{color:#e02020;font-size:10px;line-height:0;margin-left:1px}
  .m{display:flex;gap:14px;padding:4px 11px 0 0}
  .m button{font:inherit;border:0;background:none;padding:0;display:flex;gap:3px;color:#000}
  </style><aside><button aria-label="Закрыть">x</button><p>Инструменты</p></aside><section><div class="v"><table><colgroup>${cols.map(c=>`<col${c[0]?` style="width:${c[0]}px"`:''}>`).join('')}</colgroup>
  <thead><tr>${cols.map(c=>`<th scope="col">${c[1]}</th>`).join('')}</tr></thead><tbody><tr><td colspan="9"><span><b></b>Баланс: 304.08 EUR&nbsp; Средства: 304.08&nbsp; Свободная маржа: 304.08</span></td><td><span>0.00 <mt-icon name="plus" box="16"></mt-icon></span></td></tr></tbody></table></div>
  <footer><div class="t" role="tablist">${tabs.map((t,i)=>`<button role="tab"${i?'':' class="on"'}>${t}</button>`).join('')}</div>
  <div class="m"><button><mt-icon name="bag" size="16"></mt-icon>Маркет</button><button><mt-icon name="signals" size="16"></mt-icon>Сигналы</button><button><mt-icon name="vps" size="16"></mt-icon>VPS</button><button><mt-icon name="tester" box="16"></mt-icon>Тестер стратегий</button></div></footer></section>`}
}
customElements.define('mt-toolbox',MtToolbox);

class MtStatus extends HTMLElement{
  constructor(){super();this.attachShadow({mode:'open'}).innerHTML=`<style>
  :host{display:flex;background:var(--face);height:23px;padding-top:2px;align-items:center;border-bottom:1px solid #777;box-sizing:border-box;font-size:11px}
  span{flex:1;padding-left:2px}
  div{border-left:1px solid #a0a0a0;height:18px;line-height:18px;padding-left:5px;box-sizing:border-box;display:flex;align-items:center;gap:4px}
  div:last-child{background:repeating-conic-gradient(#b0b0b0 0 25%,transparent 0 50%) right 2px bottom/8px 8px no-repeat}
  </style><span>Для вызова справки нажмите F1</span><div style="width:129px">Default</div><div style="width:98px"></div><div style="width:71px"></div><div style="width:71px"></div><div style="width:68px"></div><div style="width:70px"></div><div style="width:66px"></div><div style="width:120px"><mt-icon name="net" box="16"></mt-icon>3763 / 7 Kb</div>`}
}
customElements.define('mt-status',MtStatus);

class MtTerminal extends HTMLElement{
  constructor(){super();this.attachShadow({mode:'open'}).innerHTML=`<style>
  :host{display:flex;flex-direction:column;background:var(--face)}
  mt-titlebar,mt-menu,mt-toolbar,mt-frames,mt-tabs,mt-toolbox,mt-status{flex:none}
  main{flex:1;min-height:0;display:flex;border-left:1px solid #696969;border-right:2px solid #999}
  main>*{min-width:0}
  .l{flex:1;display:flex}.r{flex:2;display:flex;flex-direction:column;border-left:2px solid #696969}
  </style><mt-titlebar>1249440 - AMPGlobalEU-Demo: Демо-счет - Netting - EPU21,M5</mt-titlebar><mt-menu></mt-menu><mt-toolbar></mt-toolbar><mt-frames></mt-frames>
  <main><div class="l"><mt-window active cut><span slot="title">EPU21,M5</span><mt-chart kind="m5"></mt-chart></mt-window></div>
  <div class="r"><mt-window><span slot="title">MESU21,M1</span><mt-chart kind="m1a"></mt-chart></mt-window><mt-window cut><span slot="title">MESU21,M1</span><mt-chart kind="m1b"></mt-chart></mt-window></div></main>
  <mt-tabs></mt-tabs><mt-toolbox></mt-toolbox><mt-status></mt-status>`}
}
customElements.define('mt-terminal',MtTerminal);
</script>
</body>
</html>
